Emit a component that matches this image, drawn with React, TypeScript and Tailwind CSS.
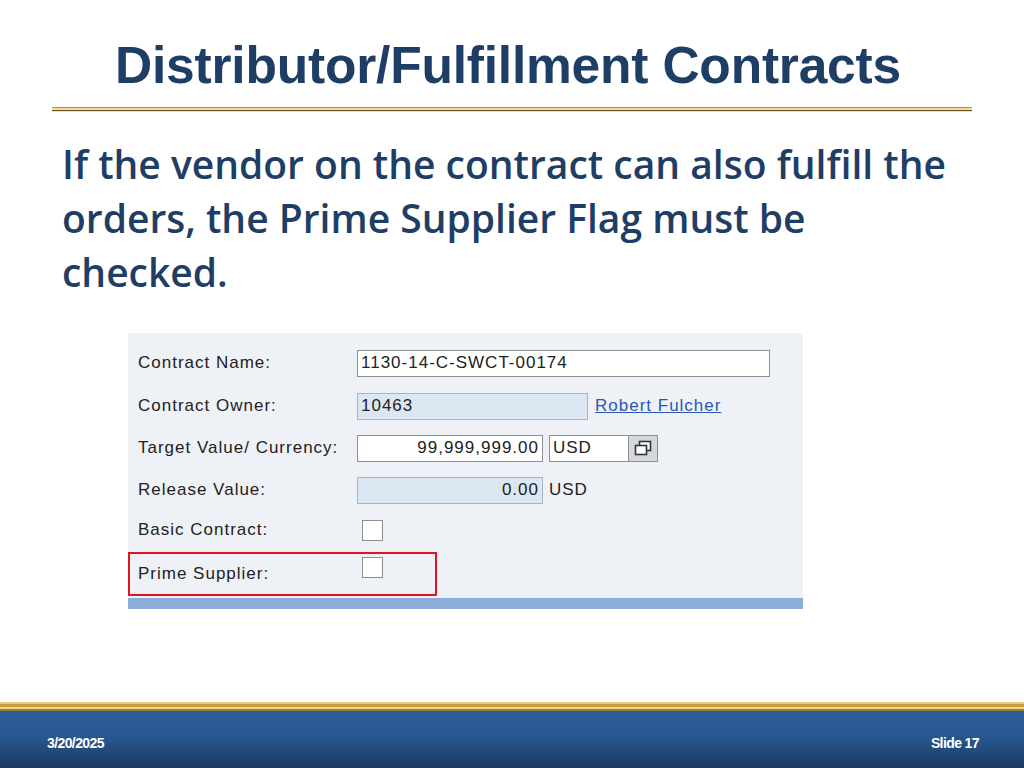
import React from "react";

const sap = { fontFamily: '"Liberation Sans", Arial, sans-serif' };

const fieldText = "text-[17px] tracking-[1px] text-[#222]";

function Label({ children }: { children: React.ReactNode }) {
  return (
    <div className={`w-[219px] shrink-0 ${fieldText}`} style={sap}>
      {children}
    </div>
  );
}

function Checkbox() {
  return <div className="w-[21px] h-[21px] border border-[#8d8d8d] bg-white ml-[5px]" />;
}

export default function App() {
  return (
    <div className="w-[1024px] h-[768px] bg-white flex flex-col overflow-hidden relative">
      {/* Title */}
      <div className="h-[104px] flex items-center justify-center pt-[28px] pr-[8px]">
        <h1
          className="text-[51.5px] font-bold text-[#1f3e66] leading-none tracking-[-0.2px]"
          style={{ fontFamily: '"Liberation Sans", Arial, sans-serif' }}
        >
          Distributor/Fulfillment Contracts
        </h1>
      </div>
      {/* Separator */}
      <div className="mx-[52px] mt-[3px] flex flex-col">
        <div className="h-[1px] bg-[#b8912e]" />
        <div className="h-[2px] bg-[#f4dc9c]" />
        <div className="h-[1px] bg-[#6b5220]" />
        <div className="h-[1px] bg-[#f3dfa2]" />
      </div>
      {/* Body */}
      <div
        className="pl-[62px] pr-[20px] mt-[25px] text-[39px] font-semibold text-[#1f3e66] leading-[54px] whitespace-nowrap"
        style={{ fontFamily: '"Open Sans", Lato, sans-serif' }}
      >
        If the vendor on the contract can also fulfill the
        <br />
        orders, the Prime Supplier Flag must be
        <br />
        checked.
      </div>
      {/* Screenshot */}
      <div className="ml-[128px] mt-[34px] w-[675px] h-[276px] bg-[#eef1f5] flex flex-col">
        <div className="flex-1 pl-[10px] pt-[16px] flex flex-col">
          <div className="flex items-center h-[28px]">
            <Label>Contract Name:</Label>
            <div className={`w-[413px] h-[27px] border border-[#8f8f8f] bg-white px-[3px] flex items-center ${fieldText}`} style={sap}>
              1130-14-C-SWCT-00174
            </div>
          </div>
          <div className="flex items-center h-[28px] mt-[15px]">
            <Label>Contract Owner:</Label>
            <div className={`w-[231px] h-[27px] border border-[#a7b4c4] bg-[#dce7f4] px-[3px] flex items-center ${fieldText}`} style={sap}>
              10463
            </div>
            <a className="ml-[7px] text-[17px] tracking-[1px] text-[#2a58b0] underline" style={sap}>
              Robert Fulcher
            </a>
          </div>
          <div className="flex items-center h-[28px] mt-[14px]">
            <Label>Target Value/ Currency:</Label>
            <div className={`w-[186px] h-[27px] border border-[#8f8f8f] bg-white px-[3px] flex items-center justify-end ${fieldText}`} style={sap}>
              99,999,999.00
            </div>
            <div className={`ml-[6px] w-[80px] h-[27px] border border-[#8f8f8f] bg-white px-[3px] flex items-center ${fieldText}`} style={sap}>
              USD
            </div>
            <div className="w-[29px] h-[27px] border border-[#8f8f8f] border-l-0 bg-[#d4d7db] flex items-center justify-center">
              <svg width="18" height="16" viewBox="0 0 18 16">
                <rect x="5.5" y="1.5" width="11" height="9" fill="#fff" stroke="#333" strokeWidth="1.6" />
                <rect x="1.5" y="5.5" width="11" height="9" fill="#fff" stroke="#333" strokeWidth="1.6" />
              </svg>
            </div>
          </div>
          <div className="flex items-center h-[28px] mt-[14px]">
            <Label>Release Value:</Label>
            <div className={`w-[186px] h-[27px] border border-[#a7b4c4] bg-[#dce7f4] px-[3px] flex items-center justify-end ${fieldText}`} style={sap}>
              0.00
            </div>
            <div className={`ml-[6px] ${fieldText}`} style={sap}>
              USD
            </div>
          </div>
          <div className="flex items-center h-[28px] mt-[12px]">
            <Label>Basic Contract:</Label>
            <Checkbox />
          </div>
          <div className="relative flex items-start h-[28px] mt-[12px] pt-[5px]">
            <div className="absolute left-[-10px] top-[-4px] w-[309px] h-[44px] border-2 border-[#e0141e]" />
            <Label>Prime Supplier:</Label>
            <div className="-mt-[4px]">
              <Checkbox />
            </div>
          </div>
        </div>
        <div className="h-[11px] bg-[#8aaed8]" />
      </div>
      {/* Footer */}
      <div className="absolute left-0 right-0 bottom-0 h-[66px] flex flex-col">
        <div className="h-[2px] bg-[#e8c87a]" />
        <div className="h-[3px] bg-[#c99a3c]" />
        <div className="h-[2px] bg-[#f1d58d]" />
        <div className="h-[2px] bg-[#9a7a3a]" />
        <div
          className="flex-1 flex items-center justify-between pl-[47px] pr-[45px] pt-[8px] text-white font-bold text-[14px]"
          style={{
            background: "linear-gradient(to bottom, #2c5e98 0%, #285790 45%, #1b3a62 100%)",
            fontFamily: '"Liberation Sans", Arial, sans-serif',
          }}
        >
          <span className="tracking-[-0.6px]">3/20/2025</span>
          <span className="tracking-[-0.6px]">Slide 17</span>
        </div>
      </div>
    </div>
  );
}
